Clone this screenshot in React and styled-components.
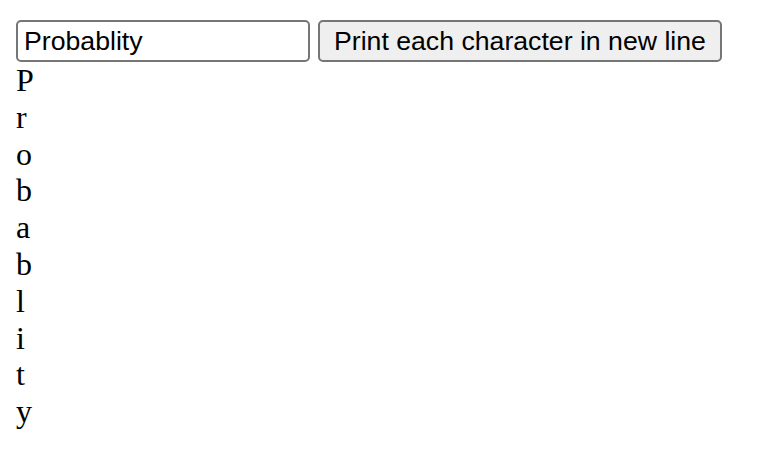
import styled, { createGlobalStyle } from "styled-components";
import { useState } from "react";

const GlobalStyle = createGlobalStyle`
  html, body {
    margin: 0;
    padding: 0;
    background: #ffffff;
  }
  body {
    font-family: "Liberation Serif", "Times New Roman", serif;
    color: #000000;
  }
`;

const Page = styled.div`
  padding: 16px;
`;

const Controls = styled.div`
  display: flex;
  align-items: flex-end;
  gap: 8px;
  height: 46px;
`;

const TextInput = styled.input`
  box-sizing: border-box;
  width: 294px;
  height: 42px;
  margin: 0;
  padding: 2px 6px;
  border: 2px solid #767676;
  border-radius: 5px;
  font-family: "Liberation Sans", Arial, sans-serif;
  font-size: 26.67px;
  color: #000000;
  background: #ffffff;
  outline: none;
`;

const ActionButton = styled.button`
  box-sizing: border-box;
  height: 42px;
  margin: 0;
  padding: 2px 14px;
  border: 2px solid #767676;
  border-radius: 5px;
  background: #efefef;
  font-family: "Liberation Sans", Arial, sans-serif;
  font-size: 26.67px;
  color: #000000;
  cursor: pointer;
`;

const CharLine = styled.div`
  font-size: 32px;
  line-height: 36.8px;
`;

function App() {
  const [word, setWord] = useState("Probablity");
  const [shown, setShown] = useState("Probablity");

  return (
    <>
      <GlobalStyle />
      <Page>
        <Controls>
          <TextInput value={word} onChange={(e) => setWord(e.target.value)} />
          <ActionButton onClick={() => setShown(word)}>
            Print each character in new line
          </ActionButton>
        </Controls>
        {shown.split("").map((ch, i) => (
          <CharLine key={i}>{ch}</CharLine>
        ))}
      </Page>
    </>
  );
}

export default App;
